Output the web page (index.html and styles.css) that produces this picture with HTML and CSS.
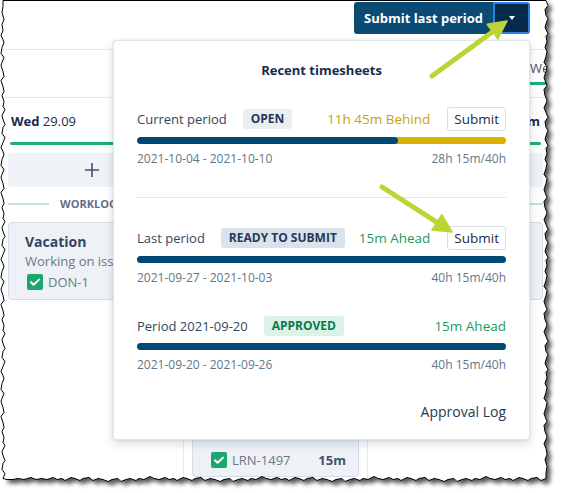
FILE: index.html
```html
<!DOCTYPE html>
<html lang="en">
<head>
<meta charset="utf-8">
<title>Recent timesheets</title>
<link rel="stylesheet" href="styles.css">
</head>
<body>
<div class="frame">
  <div class="page">
    <header class="topbar">
      <div class="split">
        <button class="split-main">Submit last period</button>
        <button class="split-caret" aria-label="More options"><span class="caret"></span></button>
      </div>
    </header>
    <nav class="tabs"><span class="tab">Week</span></nav>
    <div class="days">
      <section class="day">
        <div class="day-head"><span><b>Wed</b> 29.09</span></div>
        <div class="day-bar"></div>
        <div class="add"><svg class="plus" viewBox="0 0 16 16" width="16" height="16"><path d="M8 1v14M1 8h14"/></svg></div>
        <div class="wl">WORKLOGS</div>
        <div class="card">
          <div class="card-title">Vacation</div>
          <div class="card-desc">Working on issue</div>
          <div class="card-meta"><svg class="check" viewBox="0 0 16 16" width="16" height="16"><rect width="16" height="16" rx="2"/><path d="M4 8.3l2.6 2.5L12 5.6"/></svg><span class="key">DON-1</span></div>
        </div>
      </section>
      <section class="day">
        <div class="day-head"></div>
        <div class="day-bar"></div>
        <div class="add"></div>
        <div class="wl"></div>
        <div class="card blank"></div>
        <div class="card blank"></div>
        <div class="card last">
          <div class="card-meta"><svg class="check" viewBox="0 0 16 16" width="16" height="16"><rect width="16" height="16" rx="2"/><path d="M4 8.3l2.6 2.5L12 5.6"/></svg><span class="key">LRN-1497</span><b class="time">15m</b></div>
        </div>
      </section>
      <section class="day">
        <div class="day-head"><span></span><b>15m</b></div>
        <div class="day-bar"></div>
        <div class="add"></div>
        <div class="wl"></div>
        <div class="card blank"></div>
      </section>
    </div>

    <div class="popup">
      <h2 class="popup-title">Recent timesheets</h2>
      <div class="period">
        <div class="p-head">
          <span class="p-label">Current period</span>
          <span class="badge">OPEN</span>
          <span class="status behind">11h 45m Behind</span>
          <button class="btn">Submit</button>
        </div>
        <div class="bar behind-bar"><div class="fill" style="width:70.6%"></div></div>
        <div class="dates"><span>2021-10-04 - 2021-10-10</span><span>28h 15m/40h</span></div>
      </div>
      <div class="divider"></div>
      <div class="period gap-after-divider">
        <div class="p-head">
          <span class="p-label">Last period</span>
          <span class="badge ready">READY TO SUBMIT</span>
          <span class="status ahead">15m Ahead</span>
          <button class="btn">Submit</button>
        </div>
        <div class="bar"></div>
        <div class="dates"><span>2021-09-27 - 2021-10-03</span><span>40h 15m/40h</span></div>
      </div>
      <div class="period">
        <div class="p-head">
          <span class="p-label">Period 2021-09-20</span>
          <span class="badge approved">APPROVED</span>
          <span class="status ahead">15m Ahead</span>
        </div>
        <div class="bar tight"></div>
        <div class="dates"><span>2021-09-20 - 2021-09-26</span><span>40h 15m/40h</span></div>
      </div>
      <div class="log">Approval Log</div>
    </div>
  </div>

  <svg class="overlay" viewBox="0 0 561 493" width="561" height="493" aria-hidden="true">
    <defs>
      <path id="torn" d="M3 0.5 L546 0.5
        l2 5 -3 4 1 6 2 3 -2 5 -1 4 3 6 -2 3 1 5 -2 6 2 4 -1 5
        l-2 6 3 4 -1 5 -2 6 1 3 2 5 -3 4 1 6 2 5 -1 3 -2 4 2 5
        l2 5 -3 4 1 6 2 3 -2 5 -1 4 3 6 -2 3 1 5 -2 6 2 4 -1 5
        l-2 6 3 4 -1 5 -2 6 1 3 2 5 -3 4 1 6 2 5 -1 3 -2 4 2 5
        l2 5 -3 4 1 6 2 3 -2 5 -1 4 3 6 -2 3 1 5 -2 6 2 4 -1 5
        l-2 6 3 4 -1 5 -2 6 1 3 2 5 -3 4 1 6 2 5 -1 3 -2 4 2 5
        l2 5 -3 4 1 6 2 3 -2 5 -1 4 3 6 -2 3 1 5 -2 6 2 4 -1 5
        l-2 6 3 4 -1 5 -2 6 1 3 2 5 -3 4 1 6 2 5 -1 3 -2 4 2 5
        l1 6 -2 5 2 7 -1 6 0 6
        l-5 2 -4 -3 -6 1 -3 2 -5 -2 -4 -1 -6 3 -3 -2 -5 1 -4 -2 -6 2 -5 -1
        l-4 -2 -6 3 -5 -1 -3 2 -6 -2 -4 1 -5 2 -3 -3 -6 1 -4 2 -5 -2 -5 -1
        l-5 2 -4 -3 -6 1 -3 2 -5 -2 -4 -1 -6 3 -3 -2 -5 1 -4 -2 -6 2 -5 -1
        l-4 -2 -6 3 -5 -1 -3 2 -6 -2 -4 1 -5 2 -3 -3 -6 1 -4 2 -5 -2 -5 -1
        l-5 2 -4 -3 -6 1 -3 2 -5 -2 -4 -1 -6 3 -3 -2 -5 1 -4 -2 -6 2 -5 -1
        l-4 -2 -6 3 -5 -1 -3 2 -6 -2 -4 1 -5 2 -3 -3 -6 1 -4 2 -5 -2 -5 -1
        l-5 2 -4 -3 -6 1 -3 2 -5 -2 -4 -1 -6 3 -3 -2 -5 1 -4 -2 -6 2 -5 -1
        l-4 -2 -6 3 -5 -1 -3 2 -6 -2 -4 1 -5 2 -3 -3 -6 1 -4 2 -5 -2 -5 -1
        l-5 2 -4 -3 -6 1 -3 2 -5 -2 -4 -1 -6 3 -3 -2 -5 1 -4 -2 -6 2 -5 -1
        l-6 1 -5 -2 -7 2 -6 -1 -5 1 -6 0 -4 -1
        l2 -5 -3 -4 1 -6 2 -3 -2 -5 -1 -4 3 -6 -2 -3 1 -5 -2 -6 2 -4 -1 -5
        l-2 -6 3 -4 -1 -5 -2 -6 1 -3 2 -5 -3 -4 1 -6 2 -5 -1 -3 -2 -4 2 -5
        l2 -5 -3 -4 1 -6 2 -3 -2 -5 -1 -4 3 -6 -2 -3 1 -5 -2 -6 2 -4 -1 -5
        l-2 -6 3 -4 -1 -5 -2 -6 1 -3 2 -5 -3 -4 1 -6 2 -5 -1 -3 -2 -4 2 -5
        l2 -5 -3 -4 1 -6 2 -3 -2 -5 -1 -4 3 -6 -2 -3 1 -5 -2 -6 2 -4 -1 -5
        l-2 -6 3 -4 -1 -5 -2 -6 1 -3 2 -5 -3 -4 1 -6 2 -5 -1 -3 -2 -4 2 -5
        l2 -5 -3 -4 1 -6 2 -3 -2 -5 -1 -4 3 -6 -2 -3 1 -5 -2 -6 2 -4 -1 -5
        l-2 -6 3 -4 -1 -5 -2 -6 1 -3 2 -5 -3 -4 1 -6 2 -5 -1 -3 -2 -4 2 -5
        l-1 -6 2 -5 -2 -7 1 -6 0 -6 Z"/>
      <mask id="outside" maskUnits="userSpaceOnUse" x="0" y="0" width="561" height="493">
        <rect width="561" height="493" fill="#fff"/>
        <use href="#torn" fill="#000"/>
      </mask>
      <filter id="blur" x="-10%" y="-10%" width="120%" height="120%">
        <feGaussianBlur stdDeviation="2"/>
      </filter>
    </defs>
    <g mask="url(#outside)">
      <rect width="561" height="493" fill="#fff"/>
      <use href="#torn" fill="#5a5a5a" transform="translate(4 4)" filter="url(#blur)"/>
    </g>
    <use href="#torn" fill="none" stroke="#000" stroke-width="1"/>
    <g class="arrow">
      <line x1="432" y1="76" x2="493" y2="31.5"/>
      <polygon points="507,21 497.8,38.9 487.2,24.3"/>
      <line x1="382" y1="187" x2="437" y2="222.3"/>
      <polygon points="452,232 432,229.9 441.8,214.7"/>
    </g>
  </svg>
</div>
</body>
</html>
```

FILE: styles.css
```css
* { box-sizing: border-box; }

html, body {
  margin: 0;
  background: #fff;
}

body {
  font-family: "Open Sans", "Noto Sans", sans-serif;
  color: #172b4d;
}

button { font-family: inherit; cursor: pointer; }

.frame {
  position: relative;
  width: 561px;
  height: 493px;
  overflow: hidden;
}

.page {
  position: relative;
  width: 561px;
  height: 493px;
  overflow: hidden;
  background: #fff;
}

/* top bar */
.topbar {
  height: 50px;
  border-bottom: 1px solid #e6eaee;
  display: flex;
  justify-content: flex-end;
  align-items: flex-start;
  padding: 2px 31px 0 0;
}

.split { display: flex; height: 32px; }

.split-main {
  width: 139px;
  border: 0;
  padding: 0;
  background: #0b4a73;
  color: #fff;
  font-size: 13px;
  font-weight: 700;
  border-radius: 3px 0 0 3px;
}

.split-caret {
  width: 37px;
  padding: 0;
  background: #062c4d;
  border: 2px solid #2a80e2;
  border-radius: 0 3px 3px 0;
  display: flex;
  align-items: center;
  justify-content: center;
}

.caret {
  width: 0;
  height: 0;
  border-left: 3.5px solid transparent;
  border-right: 3.5px solid transparent;
  border-top: 4px solid #fff;
}

/* tabs */
.tabs {
  height: 48px;
  border-bottom: 1px solid #e6eaee;
  padding-left: 530px;
  display: flex;
  align-items: flex-start;
}

.tab {
  padding-top: 9px;
  padding-bottom: 5px;
  line-height: 18px;
  font-size: 13px;
  color: #42526e;
  border-bottom: 3px solid #1aaf76;
  white-space: nowrap;
  min-width: 40px;
}

/* day columns */
.days {
  display: grid;
  grid-template-columns: 184px 184px 184px;
}

.day {
  padding: 0 8px;
  border-right: 1px solid #e4e9ee;
  height: 400px;
}

.day-head {
  display: flex;
  justify-content: space-between;
  height: 32px;
  padding: 14px 3px 0;
  line-height: 18px;
  font-size: 13px;
  color: #172b4d;
}

.day-bar {
  height: 3px;
  margin: 12px 2px 0;
  background: #1aaf76;
  border-radius: 2px;
}

.add {
  height: 34px;
  margin-top: 8px;
  background: #eff2f6;
  border-radius: 3px;
  display: flex;
  align-items: center;
  justify-content: center;
}

.plus path { stroke: #42526e; stroke-width: 1.6; fill: none; }

.wl {
  display: flex;
  align-items: center;
  gap: 11px;
  height: 16px;
  margin-top: 9px;
  line-height: 16px;
  font-size: 11px;
  font-weight: 700;
  color: #5e7287;
}

.wl::before,
.wl::after {
  content: "";
  flex: 1;
  height: 2px;
  background: #c8dfe3;
}

.card {
  margin-top: 10px;
  background: #eef2f6;
  border: 1px solid #d3dce5;
  border-radius: 4px;
  padding: 8px 12px 9px 16px;
}

.card.blank { height: 78px; }
.card.last { padding-top: 53px; padding-bottom: 8px; }

.card-title {
  font-size: 14px;
  font-weight: 700;
  line-height: 21px;
  color: #344563;
}

.card-desc {
  font-size: 13px;
  line-height: 18px;
  color: #6b7888;
  white-space: nowrap;
  overflow: hidden;
}

.card-meta {
  margin-top: 4px;
  height: 16px;
  display: flex;
  align-items: center;
  font-size: 13px;
  color: #6b7888;
}

.card.last .card-meta { margin-top: 0; }

.check { margin-left: 2px; margin-right: 5px; flex: none; }
.check rect { fill: #1aa86f; }
.check path { fill: none; stroke: #fff; stroke-width: 2; stroke-linecap: round; stroke-linejoin: round; }

.time { margin-left: auto; font-weight: 700; color: #42526e; }

/* popup */
.popup {
  position: absolute;
  left: 113px;
  top: 40px;
  width: 417px;
  height: 400px;
  background: #fff;
  border: 1px solid #dfe5eb;
  border-radius: 3px;
  box-shadow: 0 4px 10px rgba(9, 30, 66, 0.16), 0 0 2px rgba(9, 30, 66, 0.12);
  padding: 19px 23px 0;
}

.popup-title {
  margin: 0;
  text-align: center;
  font-size: 13px;
  font-weight: 700;
  line-height: 20px;
  color: #172b4d;
}

.period { margin-top: 27px; }
.gap-after-divider { margin-top: 28px; }

.p-head {
  display: flex;
  align-items: center;
  height: 24px;
  font-size: 13px;
}

.p-label { color: #344563; }

.badge {
  margin-left: 16px;
  height: 20px;
  line-height: 20px;
  padding: 0 8px;
  border-radius: 3px;
  font-size: 12px;
  font-weight: 700;
  background: #e9eef3;
  color: #253858;
}

.badge.ready { background: #d9e3eb; }
.badge.approved { background: #daf2e8; color: #0b7a48; }

.status { margin-left: auto; font-size: 13.5px; }
.status.behind { color: #c9a306; }
.status.ahead { color: #1c9a5e; }

.btn {
  margin-left: 17px;
  height: 24px;
  padding: 0 6px;
  border: 1px solid #d6dde4;
  border-radius: 3px;
  background: #fff;
  font-size: 13.5px;
  color: #172b4d;
}

.bar {
  margin-top: 6px;
  height: 7px;
  border-radius: 4px;
  background: #004975;
  overflow: hidden;
}

.bar.tight { margin-top: 5px; }

.behind-bar { background: #d9b100; }
.behind-bar .fill { height: 100%; background: #004975; border-radius: 4px; }

.dates {
  margin-top: 6px;
  display: flex;
  justify-content: space-between;
  font-size: 12px;
  line-height: 18px;
  color: #5f7787;
}

.divider {
  margin-top: 29px;
  height: 1px;
  background: #e1e7ec;
}

.log {
  margin-top: 28px;
  text-align: right;
  font-size: 14px;
  line-height: 20px;
  color: #253858;
}

/* decoration overlay: torn edge + callout arrows */
.overlay {
  position: absolute;
  left: 0;
  top: 0;
  pointer-events: none;
}

.arrow line { stroke: #bcd534; stroke-width: 5; stroke-linecap: round; }
.arrow polygon { fill: #bcd534; stroke: #bcd534; stroke-width: 1.5; stroke-linejoin: round; }
```
